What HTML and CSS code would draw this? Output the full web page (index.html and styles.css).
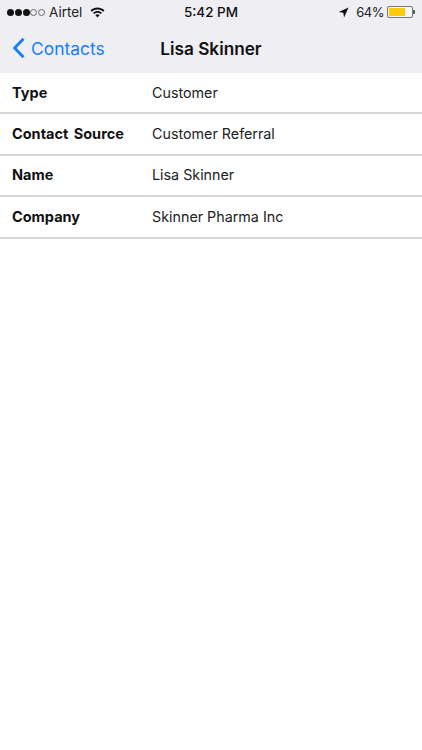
FILE: index.html
```html
<!DOCTYPE html>
<html lang="en">
<head>
    <meta charset="UTF-8">
    <meta name="viewport" content="width=device-width, initial-scale=1.0">
    <title>Lisa Skinner</title>
    <link rel="stylesheet" href="styles.css">
</head>
<body>
    <header class="top">
        <div class="status-bar">
            <div class="status-left">
                <span class="signal">
                    <i class="dot"></i><i class="dot"></i><i class="dot"></i><i class="dot empty"></i><i class="dot empty"></i>
                </span>
                <span class="carrier">Airtel</span>
                <svg class="wifi" viewBox="0 0 16 12">
                    <path d="M0.6 4.2C4.8 0.2 11.2 0.2 15.4 4.2L14.1 5.6C10.6 2.4 5.4 2.4 1.9 5.6Z"/>
                    <path d="M3.2 6.9C6 4.3 10 4.3 12.8 6.9L11.5 8.2C9.4 6.4 6.6 6.4 4.5 8.2Z"/>
                    <path d="M5.7 9.3C7.1 8.2 8.9 8.2 10.3 9.3L8 11.8Z"/>
                </svg>
            </div>
            <div class="clock">5:42 PM</div>
            <div class="status-right">
                <svg class="arrow" viewBox="0 0 12 12">
                    <path d="M11.5 0.5L0.8 5.4L5.8 6.2L6.6 11.5Z"/>
                </svg>
                <span class="percent">64%</span>
                <span class="battery"><span class="battery-fill"></span></span>
                <span class="battery-cap"></span>
            </div>
        </div>
        <nav class="nav-bar">
            <a class="back">
                <svg class="chevron" viewBox="0 0 14 22">
                    <path d="M11.5 1.8L2.6 11L11.5 20.2"/>
                </svg>
                <span>Contacts</span>
            </a>
            <div class="nav-title">Lisa Skinner</div>
        </nav>
    </header>
    <main class="details">
        <div class="row">
            <div class="label">Type</div>
            <div class="value">Customer</div>
        </div>
        <div class="row">
            <div class="label">Contact Source</div>
            <div class="value">Customer Referral</div>
        </div>
        <div class="row">
            <div class="label">Name</div>
            <div class="value">Lisa Skinner</div>
        </div>
        <div class="row">
            <div class="label">Company</div>
            <div class="value">Skinner Pharma Inc</div>
        </div>
    </main>
</body>
</html>
```

FILE: styles.css
```css
html, body {
    height: 100%;
}
body {
    margin: 0;
    background: #fff;
    color: #111;
    font-family: Inter, "Liberation Sans", sans-serif;
}
.top {
    height: 73px;
    background: #eeeef3;
}
.status-bar {
    position: relative;
    display: flex;
    justify-content: space-between;
    align-items: center;
    height: 24px;
    padding: 0 7px;
    font-size: 13.5px;
}
.status-left,
.status-right {
    display: flex;
    align-items: center;
}
.signal {
    display: flex;
    gap: 0.75px;
    margin-right: 4px;
}
.dot {
    width: 7px;
    height: 7px;
    box-sizing: border-box;
    border-radius: 50%;
    background: #111;
}
.dot.empty {
    background: none;
    border: 1px solid #666;
}
.carrier {
    color: #222;
}
.wifi {
    width: 15px;
    height: 12px;
    margin-left: 8px;
    fill: #111;
}
.clock {
    position: absolute;
    left: 0;
    right: 0;
    text-align: center;
    font-weight: 500;
    color: #111;
}
.arrow {
    width: 11px;
    height: 11px;
    margin-right: 7px;
    fill: #111;
}
.percent {
    margin-right: 3px;
    font-size: 13px;
    letter-spacing: -0.5px;
    color: #222;
}
.battery {
    display: block;
    width: 26px;
    height: 12px;
    box-sizing: border-box;
    border: 1px solid #777;
    border-radius: 2px;
    padding: 1px;
    background: #f8f8f8;
}
.battery-fill {
    display: block;
    width: 16px;
    height: 100%;
    background: #fdcb0b;
}
.battery-cap {
    width: 2px;
    height: 4px;
    background: #555;
    border-radius: 0 1px 1px 0;
}
.nav-bar {
    position: relative;
    display: flex;
    align-items: center;
    height: 48px;
}
.back {
    display: flex;
    align-items: center;
    gap: 5px;
    padding-left: 12px;
    font-size: 17.4px;
    color: #167efb;
}
.chevron {
    width: 14px;
    height: 22px;
    fill: none;
    stroke: #167efb;
    stroke-width: 2.8;
}
.nav-title {
    position: absolute;
    left: 0;
    right: 0;
    text-align: center;
    font-size: 17.2px;
    font-weight: 600;
    color: #111;
}
.row {
    display: flex;
    align-items: center;
    height: 41.4px;
    box-sizing: border-box;
    padding-left: 12px;
    padding-bottom: 1px;
    border-bottom: 2px solid #d6d6d8;
    font-size: 14.3px;
}
.label {
    width: 140px;
    font-size: 14.5px;
    font-weight: 700;
    word-spacing: 2px;
    color: #111;
}
.value {
    color: #222;
}
```
